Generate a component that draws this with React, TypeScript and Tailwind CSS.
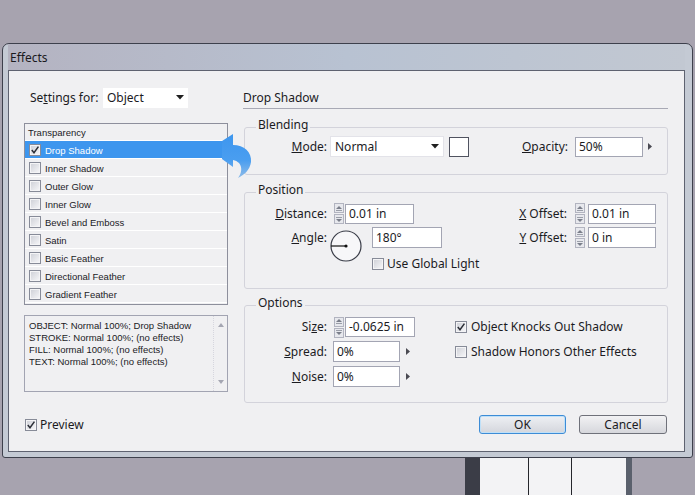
import React from "react";

const small = "font-['Liberation_Sans',Arial,sans-serif] text-[9.5px]";

function CheckBox({ checked = false }: { checked?: boolean }) {
  return (
    <span className="flex h-[12px] w-[12px] shrink-0 items-center justify-center border border-[#878b98] bg-linear-to-br from-[#cdcfd6] to-[#f8f8fa] shadow-[inset_0_0_0_1px_#f4f4f6]">
      {checked && (
        <svg width="10" height="10" viewBox="0 0 10 10">
          <path d="M1.8 5 L4 7.8 L8.4 1.6" stroke="#2b2e36" strokeWidth="1.5" fill="none" />
        </svg>
      )}
    </span>
  );
}

function Spinner({ className = "" }: { className?: string }) {
  return (
    <div className={"flex h-[21px] w-[10px] shrink-0 flex-col justify-between " + className}>
      <div className="flex h-[10px] items-center justify-center border border-[#b2b4c0] bg-[#e7e8ed]">
        <svg width="6" height="5" viewBox="0 0 6 5">
          <path d="M0 3 L3 0 L6 3Z" fill="#7a7e8a" />
          <rect x="0" y="4" width="6" height="1" fill="#9a9ea8" />
        </svg>
      </div>
      <div className="flex h-[10px] items-center justify-center border border-[#b2b4c0] bg-[#e7e8ed]">
        <svg width="6" height="5" viewBox="0 0 6 5">
          <path d="M0 2 L3 5 L6 2Z" fill="#7a7e8a" />
          <rect x="0" y="0" width="6" height="1" fill="#9a9ea8" />
        </svg>
      </div>
    </div>
  );
}

function Field({ className = "", value }: { className?: string; value: string }) {
  return (
    <div className={"flex shrink-0 items-center border border-[#a3a5b3] bg-white pl-[3px] text-[12px] " + className}>
      {value}
    </div>
  );
}

function Select({ className = "", value }: { className?: string; value: string }) {
  return (
    <div className={"flex shrink-0 items-center justify-between bg-white pl-[4px] pr-[4px] text-[12px] " + className}>
      <span>{value}</span>
      <svg width="8" height="5" viewBox="0 0 8 5">
        <path d="M0 0 H8 L4 4.5Z" fill="#1f1f1f" />
      </svg>
    </div>
  );
}

function RightArrow({ className = "" }: { className?: string }) {
  return (
    <svg width="4" height="7" viewBox="0 0 4 7" className={"shrink-0 " + className}>
      <path d="M0 0 L4 3.5 L0 7Z" fill="#4a4a52" />
    </svg>
  );
}

function Group({ title, className = "", children }: { title: string; className?: string; children?: React.ReactNode }) {
  return (
    <div className={"relative ml-[1px] w-[424px] rounded-[3px] border border-[#d3d3db] " + className}>
      <span className="absolute left-[11px] top-[-11px] bg-[#f0f0f2] px-[2px] text-[12px] leading-[16px]">{title}</span>
      {children}
    </div>
  );
}

const effects = [
  "Drop Shadow",
  "Inner Shadow",
  "Outer Glow",
  "Inner Glow",
  "Bevel and Emboss",
  "Satin",
  "Basic Feather",
  "Directional Feather",
  "Gradient Feather",
];

export default function App() {
  return (
    <div className="flex h-[495px] w-[695px] flex-col overflow-hidden bg-[#a7a3af] font-['Noto_Sans',sans-serif] text-[#1b1b1f]">
      <div className="h-[43px] shrink-0" />
      <div className="ml-[2px] flex h-[415px] w-[691px] shrink-0 flex-col rounded-t-[7px] rounded-b-[3px] border border-[#3d404c] bg-[#c4cad4] pb-[5px] pl-[5px] pr-[7px]">
        <div className="flex h-[26px] shrink-0 items-center bg-linear-to-r from-[#b4b3c1] via-[#b8c2d2] to-[#c2c8d2] pl-[2px] pt-[1px] text-[12px] text-[#1a1a1e]">
          Effects
        </div>
        <div className="relative flex flex-1 border border-[#5e6270] bg-[#f0f0f2] pt-[16px]">
          {/* left column */}
          <div className="ml-[15px] flex w-[204px] flex-col">
            <div className="flex h-[20px] items-center pt-[1px]">
              <span className="ml-[6px] w-[73px] text-[12px]">
                Se<span className="underline">t</span>tings for:
              </span>
              <Select className="h-[20px] w-[85px]" value="Object" />
            </div>
            <div className="mt-[16px] flex h-[182px] flex-col border border-[#8d8f9c]">
              <div className={"flex h-[17px] shrink-0 items-center border-b border-white pl-[3px] pt-[2px] " + small}>Transparency</div>
              {effects.map((e, i) => (
                <div
                  key={e}
                  className={
                    "flex h-[18px] shrink-0 items-center gap-[4px] border-b border-white pl-[4px] pt-[1px] " +
                    small +
                    (i === 0 ? " bg-[#3d96ee] text-white" : "")
                  }
                >
                  <CheckBox checked={i === 0} />
                  <span className="pt-[2px]">{e}</span>
                </div>
              ))}
            </div>
            <div className="mt-[10px] flex h-[77px] border border-[#a2a4b2]">
              <div className={"flex-1 pl-[4px] pt-[4px] leading-[12px] " + small}>
                <div>OBJECT: Normal 100%; Drop Shadow</div>
                <div>STROKE: Normal 100%; (no effects)</div>
                <div>FILL: Normal 100%; (no effects)</div>
                <div>TEXT: Normal 100%; (no effects)</div>
              </div>
              <div className="flex w-[14px] flex-col items-center justify-between border-l border-dotted border-[#d6d6de] py-[7px]">
                <svg width="6" height="4" viewBox="0 0 6 4">
                  <path d="M0 4 L3 0 L6 4Z" fill="#a4a6b2" />
                </svg>
                <svg width="6" height="4" viewBox="0 0 6 4">
                  <path d="M0 0 L3 4 L6 0Z" fill="#a4a6b2" />
                </svg>
              </div>
            </div>
            <div className="ml-[1px] mt-[24px] flex items-center gap-[3px] text-[12px]">
              <CheckBox checked />
              Preview
            </div>
          </div>

          {/* right column */}
          <div className="ml-[15px] flex w-[425px] flex-col">
            <div className="flex h-[22px] items-center border-b border-[#a8a9b5] text-[12px]">Drop Shadow</div>

            <Group title="Blending" className="mt-[18px] h-[48px] pt-[8px]">
              <div className="flex h-[21px] items-center text-[12px]">
                <span className="w-[82px] shrink-0 text-right">
                  <span className="underline">M</span>ode:
                </span>
                <Select className="ml-[3px] h-[21px] w-[114px] border border-[#e3e3e9]" value="Normal" />
                <div className="ml-[5px] h-[20px] w-[20px] shrink-0 border border-[#505360] bg-white" />
                <span className="ml-auto">
                  <span className="underline">O</span>pacity:
                </span>
                <Field className="ml-[7px] h-[20px] w-[68px]" value="50%" />
                <RightArrow className="ml-[5px] mr-[15px]" />
              </div>
            </Group>

            <Group title="Position" className="mt-[17px] h-[97px] pt-[10px]">
              <div className="flex h-[21px] items-center text-[12px]">
                <span className="w-[82px] shrink-0 text-right">
                  <span className="underline">D</span>istance:
                </span>
                <Spinner className="ml-[7px]" />
                <Field className="ml-[1px] h-[20px] w-[69px]" value="0.01 in" />
                <span className="ml-auto">
                  <span className="underline">X</span> Offset:
                </span>
                <Spinner className="ml-[8px]" />
                <Field className="ml-[3px] mr-[11px] h-[20px] w-[68px]" value="0.01 in" />
              </div>
              <div className="mt-[3px] flex h-[28px] items-start text-[12px]">
                <span className="w-[82px] shrink-0 text-right leading-[21px]">
                  <span className="underline">A</span>ngle:
                </span>
                <svg width="32" height="32" viewBox="0 0 32 32" className="ml-[3px] mt-[3px] shrink-0">
                  <circle cx="16" cy="16" r="15" fill="#f7f7f9" stroke="#3a3d48" strokeWidth="1.2" />
                  <line x1="1" y1="16" x2="16" y2="16" stroke="#111" strokeWidth="1.2" />
                  <circle cx="16" cy="16" r="1.6" fill="#111" />
                </svg>
                <Field className="ml-[10px] h-[21px] w-[70px]" value="180°" />
                <span className="ml-auto leading-[21px]">
                  <span className="underline">Y</span> Offset:
                </span>
                <Spinner className="ml-[8px]" />
                <Field className="ml-[3px] mr-[11px] h-[21px] w-[68px]" value="0 in" />
              </div>
              <div className="flex items-center gap-[3px] pl-[127px] text-[12px]">
                <CheckBox />
                Use Global Light
              </div>
            </Group>

            <Group title="Options" className="mt-[16px] h-[98px] pt-[11px]">
              <div className="flex h-[20px] items-center text-[12px]">
                <span className="w-[82px] shrink-0 text-right">
                  Si<span className="underline">z</span>e:
                </span>
                <Spinner className="ml-[7px]" />
                <Field className="ml-[1px] h-[20px] w-[70px]" value="-0.0625 in" />
                <span className="ml-[40px] flex items-center gap-[4px]">
                  <CheckBox checked />
                  Object Knocks Out Shadow
                </span>
              </div>
              <div className="mt-[4px] flex h-[21px] items-center text-[12px]">
                <span className="w-[82px] shrink-0 text-right">
                  <span className="underline">S</span>pread:
                </span>
                <Field className="ml-[6px] h-[21px] w-[67px]" value="0%" />
                <RightArrow className="ml-[6px]" />
                <span className="ml-[45px] flex items-center gap-[4px]">
                  <CheckBox />
                  Shadow Honors Other Effects
                </span>
              </div>
              <div className="mt-[4px] flex h-[21px] items-center text-[12px]">
                <span className="w-[82px] shrink-0 text-right">
                  <span className="underline">N</span>oise:
                </span>
                <Field className="ml-[6px] h-[21px] w-[67px]" value="0%" />
                <RightArrow className="ml-[6px]" />
              </div>
            </Group>

            <div className="mt-[12px] flex text-[12px]">
              <div className="ml-[236px] flex h-[19px] w-[87px] items-center justify-center rounded-[3px] border border-[#3d8cd6] bg-linear-to-b from-[#eef0f4] to-[#d4d6dc] shadow-[inset_0_0_0_1px_#bfe0f8]">
                OK
              </div>
              <div className="ml-[13px] flex h-[19px] w-[88px] items-center justify-center rounded-[3px] border border-[#6f717a] bg-linear-to-b from-[#f2f2f4] to-[#d6d7dc]">
                Cancel
              </div>
            </div>
          </div>

          {/* pointer arrow over list */}
          <svg width="40" height="47" viewBox="0 0 40 47" className="absolute left-[204px] top-[62px]">
            <defs>
              <linearGradient id="arw" x1="0" y1="0" x2="0" y2="1">
                <stop offset="0" stopColor="#3d96ee" />
                <stop offset="0.6" stopColor="#4a9ef0" />
                <stop offset="1" stopColor="#8fbce8" />
              </linearGradient>
            </defs>
            <path
              d="M9 8 L20 1 L20 12 C31 12, 39 19, 38 29 C37 37, 31 42, 25 45 C30 39, 30 29, 20 27 L20 34 L9 26 Z"
              fill="url(#arw)"
            />
          </svg>
        </div>
      </div>
      <div className="flex flex-1">
        <div className="w-[465px] shrink-0" />
        <div className="w-[15px] shrink-0 bg-[#3b3d47]" />
        <div className="flex w-[146px] shrink-0 bg-[#f3f3f5]">
          <div className="w-[48px]" />
          <div className="w-[1px] bg-[#25262c]" />
          <div className="w-[42px]" />
          <div className="w-[1px] bg-[#25262c]" />
        </div>
        <div className="w-[6px] shrink-0 bg-[#5a606c]" />
      </div>
    </div>
  );
}
